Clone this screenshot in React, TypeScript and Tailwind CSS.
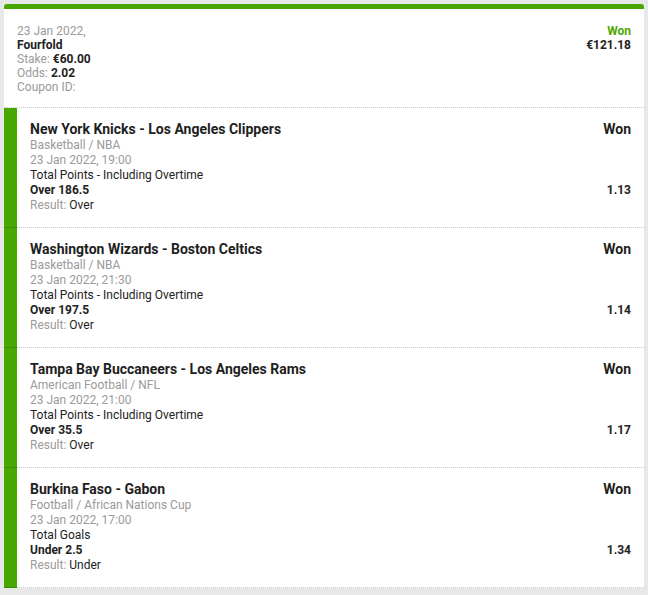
import React from 'react';

type Selection = {
  event: string;
  league: string;
  date: string;
  market: string;
  pick: string;
  odds: string;
  result: string;
};

const selections: Selection[] = [
  {
    event: 'New York Knicks - Los Angeles Clippers',
    league: 'Basketball / NBA',
    date: '23 Jan 2022, 19:00',
    market: 'Total Points - Including Overtime',
    pick: 'Over 186.5',
    odds: '1.13',
    result: 'Over',
  },
  {
    event: 'Washington Wizards - Boston Celtics',
    league: 'Basketball / NBA',
    date: '23 Jan 2022, 21:30',
    market: 'Total Points - Including Overtime',
    pick: 'Over 197.5',
    odds: '1.14',
    result: 'Over',
  },
  {
    event: 'Tampa Bay Buccaneers - Los Angeles Rams',
    league: 'American Football / NFL',
    date: '23 Jan 2022, 21:00',
    market: 'Total Points - Including Overtime',
    pick: 'Over 35.5',
    odds: '1.17',
    result: 'Over',
  },
  {
    event: 'Burkina Faso - Gabon',
    league: 'Football / African Nations Cup',
    date: '23 Jan 2022, 17:00',
    market: 'Total Goals',
    pick: 'Under 2.5',
    odds: '1.34',
    result: 'Under',
  },
];

const SelectionRow = ({ item }: { item: Selection }) => {
  return (
    <div className="flex">
      <div className="w-[13px] bg-[#48a800] border-b border-[#3a8c00]"></div>
      <div className="flex-1 px-[13px] pt-[13px] pb-[14px] border-b border-dotted border-[#c8c8c8] text-[12px] leading-[15px] text-[#222]">
        <div className="flex justify-between text-[14px] leading-[17px] font-bold text-[#1e1e1e]">
          <span>{item.event}</span>
          <span>Won</span>
        </div>
        <div className="text-[#9a9a9a]">{item.league}</div>
        <div className="text-[#9a9a9a]">{item.date}</div>
        <div>{item.market}</div>
        <div className="flex justify-between font-bold">
          <span>{item.pick}</span>
          <span>{item.odds}</span>
        </div>
        <div>
          <span className="text-[#9a9a9a]">Result:</span> {item.result}
        </div>
      </div>
    </div>
  );
};

export default function App() {
  return (
    <div className="min-h-[595px] bg-[#e8e8e8] p-1" style={{ fontFamily: 'Roboto, "Liberation Sans", sans-serif' }}>
      <div className="bg-white border-t-[5px] border-[#48a800] rounded-t-[3px]">
        {/* coupon header */}
        <div className="flex justify-between px-[13px] pt-[15px] pb-[13px] border-b border-dotted border-[#c8c8c8] text-[12px] leading-[14px] text-[#222]">
          <div>
            <div className="text-[#9a9a9a]">23 Jan 2022,</div>
            <div className="font-bold">Fourfold</div>
            <div>
              <span className="text-[#9a9a9a]">Stake:</span> <span className="font-bold">€60.00</span>
            </div>
            <div>
              <span className="text-[#9a9a9a]">Odds:</span> <span className="font-bold">2.02</span>
            </div>
            <div className="text-[#9a9a9a]">Coupon ID:</div>
          </div>
          <div className="text-right font-bold">
            <div className="text-[#4fa800]">Won</div>
            <div>€121.18</div>
          </div>
        </div>
        {selections.map((item, index) => (
          <SelectionRow key={index} item={item} />
        ))}
      </div>
    </div>
  );
}
